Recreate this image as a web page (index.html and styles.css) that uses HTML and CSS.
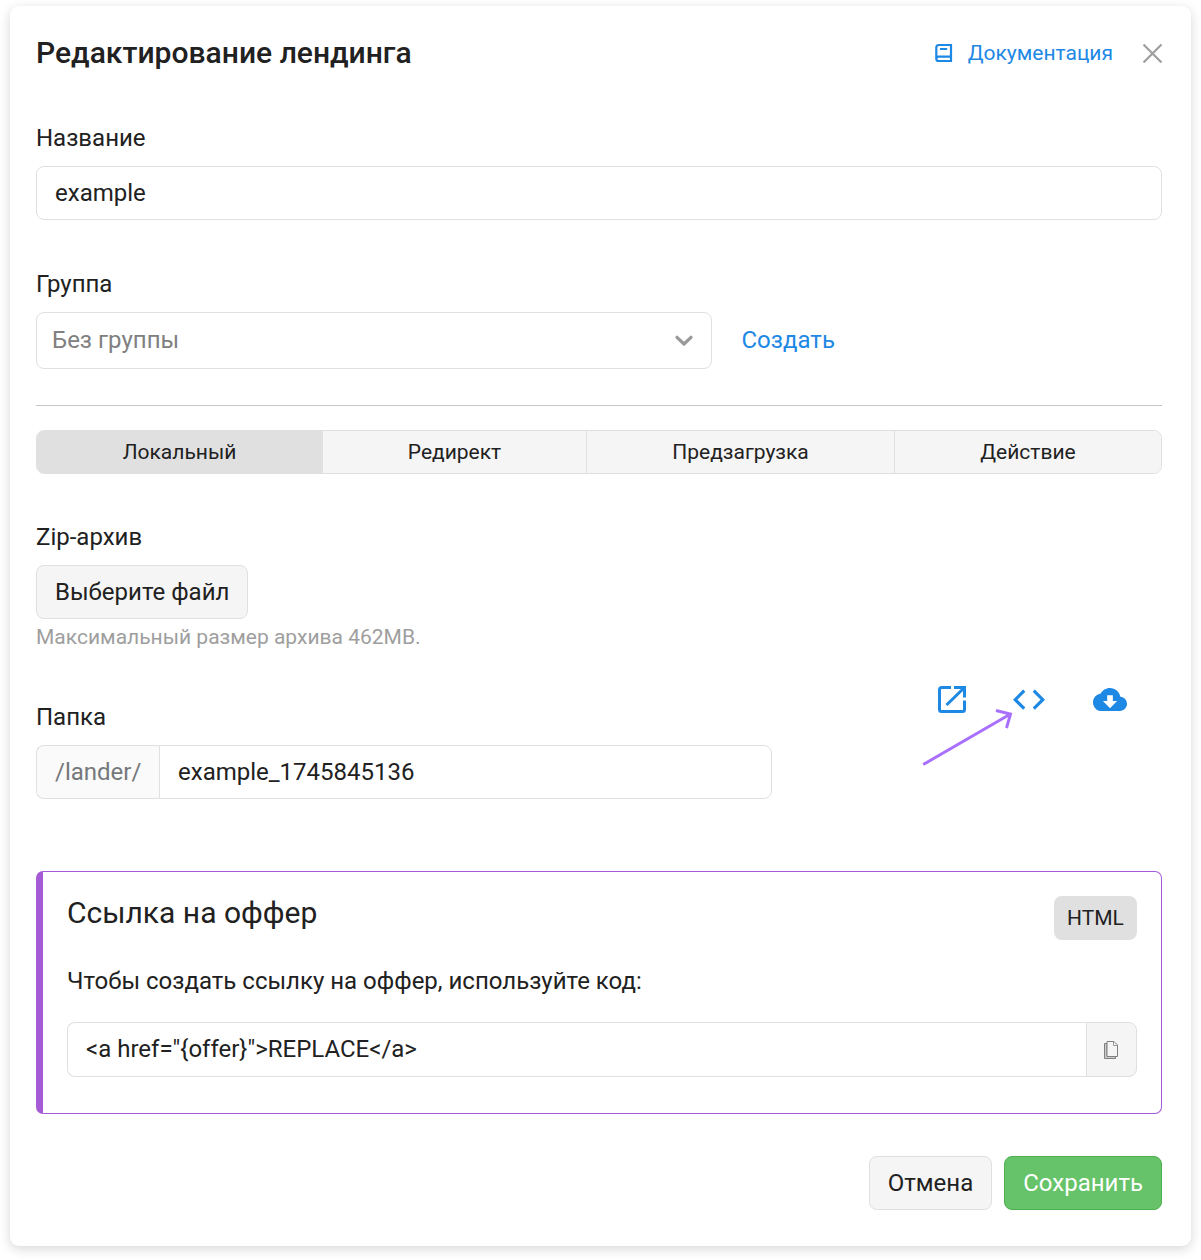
FILE: index.html
```html
<!DOCTYPE html>
<html lang="ru">
<head>
<meta charset="utf-8">
<title>Редактирование лендинга</title>
<link rel="stylesheet" href="styles.css">
</head>
<body>
<main class="modal">
  <header class="header">
    <h1 class="title">Редактирование лендинга</h1>
    <a class="docs" href="#">
      <svg width="18" height="20" viewBox="0 0 18 20" fill="none" stroke="currentColor" stroke-width="2.200"><path d="M16 2H3.800A2.400 2.400 0 0 0 1.300 4.400V16A2.300 2.300 0 0 0 3.600 18H16ZM1.500 15Q2 13.700 3.500 13.700H16"/><path d="M5 6H12.200" stroke-width="2"/></svg>
      <span>Документация</span>
    </a>
    <button class="close" aria-label="Закрыть">
      <svg width="20" height="20" viewBox="0 0 20 20" fill="none" stroke="currentColor" stroke-width="2.200"><path d="M.5 1.500 18.500 19.500M18.500 1.500 .5 19.500"/></svg>
    </button>
  </header>

  <label class="label">Название</label>
  <div class="field">example</div>

  <label class="label label-group">Группа</label>
  <div class="group-row">
    <div class="select"><span>Без группы</span>
      <svg width="18" height="11" viewBox="0 0 18 11" fill="none" stroke="currentColor" stroke-width="3.200" stroke-linecap="round" stroke-linejoin="round"><path d="M2 2.300 9 9 16 2.300"/></svg>
    </div>
    <a class="create" href="#">Создать</a>
  </div>

  <hr class="divider">

  <nav class="tabs">
    <button class="tab active">Локальный</button>
    <button class="tab">Редирект</button>
    <button class="tab">Предзагрузка</button>
    <button class="tab">Действие</button>
  </nav>

  <label class="label label-zip">Zip-архив</label>
  <button class="btn file">Выберите файл</button>
  <p class="hint">Максимальный размер архива 462MB.</p>

  <section class="folder">
    <div class="folder-main">
      <label class="label label-folder">Папка</label>
      <div class="input-group">
        <span class="addon">/lander/</span>
        <div class="field">example_1745845136</div>
      </div>
    </div>
    <div class="actions">
      <svg class="open" width="28" height="28" viewBox="0 0 28 28" fill="none" stroke="currentColor" stroke-width="3"><path d="M13 2.500H3.500A2 2 0 0 0 1.500 4.500V24.500A2 2 0 0 0 3.500 26.500H24.500A2 2 0 0 0 26.500 24.500V15.500M16 2.500H26.500V12.500M26 3 8.500 20"/></svg>
      <svg class="code" width="32" height="21" viewBox="0 0 32 21" fill="none" stroke="currentColor" stroke-width="3.200"><path d="M11.200 1.700 2.200 10.700 11.200 19.700M20.800 1.700 29.800 10.700 20.800 19.700"/></svg>
      <svg class="cloud" width="34" height="23" viewBox="0 4 24 16" preserveAspectRatio="none" fill="currentColor"><path d="M19.350 10.040C18.670 6.590 15.640 4 12 4 9.110 4 6.600 5.640 5.350 8.040 2.340 8.360 0 10.910 0 14c0 3.310 2.690 6 6 6h13c2.760 0 5-2.240 5-5 0-2.640-2.050-4.780-4.650-4.960zM17 13l-5 5-5-5h3V9h4v4h3z"/></svg>
      <svg class="pointer" width="94" height="60" viewBox="0 0 94 60" fill="none" stroke="#a970ff" stroke-width="3"><path d="M1.200 56.500 88.500 6M74 2.500 88.500 6 84.500 20"/></svg>
    </div>
  </section>

  <section class="card">
    <div class="card-head">
      <h2 class="card-title">Ссылка на оффер</h2>
      <span class="badge">HTML</span>
    </div>
    <p class="card-text">Чтобы создать ссылку на оффер, используйте код:</p>
    <div class="input-group code-line">
      <div class="field">&lt;a href="{offer}"&gt;REPLACE&lt;/a&gt;</div>
      <button class="copy" aria-label="Копировать">
        <svg width="14" height="18" viewBox="0 0 14 18"><path d="M.5 2.500H3V15.500H11.500V17.500H.5Z" fill="#ccc" stroke="#808080"/><path d="M3 .5H10L13.500 4V15.500H3Z" fill="#f5f5f5" stroke="#808080"/><path d="M9.500 .5V4.500H13.500" fill="none" stroke="#999"/></svg>
      </button>
    </div>
  </section>

  <footer class="footer">
    <button class="btn">Отмена</button>
    <button class="btn save">Сохранить</button>
  </footer>
</main>
</body>
</html>
```
FILE: styles.css
```css
* { box-sizing: border-box; }
body {
  margin: 0;
  padding: 6px 10px 14px;
  height: 1260px;
  overflow: hidden;
  background: #fff;
  color: #212121;
  font: 24px/36px Roboto, sans-serif;
}
button { font: inherit; color: inherit; margin: 0; }
a { color: #1e88e5; text-decoration: none; }
h1, h2, p { margin: 0; }
svg { display: block; flex: none; }
.modal {
  height: 1240px;
  padding: 0 29px 0 26px;
  border-radius: 9px;
  background: #fff;
  box-shadow: 0 3px 12px rgba(0, 0, 0, .16);
}
.header { display: flex; align-items: center; height: 94px; margin-right: -1px; }
.title { flex: 1; font-size: 30.050px; font-weight: 500; line-height: 36px; }
.docs { display: flex; align-items: center; gap: 14px; font-size: 21px; }
.docs svg { margin: 0 1px 0 -1px; }
.close { margin-left: 30px; padding: 0; border: 0; background: none; color: #9e9e9e; }
.label { display: block; margin: 20px 0 10px; }
.label-group { margin-top: 46px; }
.label-zip { margin-top: 45px; }
.label-folder { margin-top: 0; }
.field {
  height: 54px;
  padding: 0 18px;
  border: 1px solid #e0e0e0;
  border-radius: 8px;
  line-height: 52px;
}
.group-row { display: flex; align-items: center; gap: 29.500px; }
.group-row span, .create { padding-bottom: 2px; }
.select {
  display: flex;
  align-items: center;
  justify-content: space-between;
  width: 676px;
  height: 57px;
  padding: 0 18px 0 15px;
  border: 1px solid #e0e0e0;
  border-radius: 8px;
  color: #808080;
}
.select svg { color: #999; }
.divider { height: 1px; margin: 36px 0 24px; border: 0; background: #c6c6c6; }
.tabs {
  display: grid;
  grid-template-columns: 286px 264px 308px 1fr;
  height: 44px;
  border: 1px solid #e0e0e0;
  border-radius: 8px;
  overflow: hidden;
}
.tab {
  padding: 0;
  border: 0;
  border-right: 1px solid #e0e0e0;
  background: #f5f5f5;
  font-size: 21px;
  line-height: 42px;
}
.tab:last-child { border-right: 0; }
.tab.active { background: #e0e0e0; }
.btn {
  height: 54px;
  padding: 0 18px;
  border: 1px solid #e0e0e0;
  border-radius: 8px;
  background: #f5f5f5;
}
.file { display: block; }
.hint { color: #9e9e9e; font-size: 21px; }
.folder { display: flex; justify-content: space-between; margin-top: 44px; }
.folder-main { width: 736px; }
.input-group { display: flex; }
.input-group .field { flex: 1; }
.addon {
  width: 123px;
  padding-left: 18px;
  border: 1px solid #e0e0e0;
  border-right: 0;
  border-radius: 8px 0 0 8px;
  background: #fafafa;
  color: #75787b;
  line-height: 52px;
}
.addon + .field { border-radius: 0 8px 8px 0; }
.actions { position: relative; display: flex; align-items: center; height: 28px; width: 224px; margin-top: -14px; color: #1e88e5; }
.code { margin-left: 47px; }
.cloud { margin-left: 47.500px; }
.pointer { position: absolute; left: -16px; top: 23px; }
.card {
  height: 243px;
  margin-top: 72px;
  padding: 24px 24px 0;
  border: 1px solid #a55bd5;
  border-left-width: 7px;
  border-radius: 7px;
}
.card-head { display: flex; justify-content: space-between; }
.card-title { font-size: 30px; font-weight: 400; line-height: 34px; }
.badge {
  width: 83px;
  height: 44px;
  border-radius: 8px;
  background: #e0e0e0;
  font-size: 21px;
  line-height: 44px;
  text-align: center;
}
.card-text { margin: 23px 0; }
.code-line .field { height: 55px; border-right: 0; border-radius: 8px 0 0 8px; }
.copy {
  display: grid;
  place-items: center;
  width: 51px;
  padding: 0 1px 0 0;
  border: 1px solid #e0e0e0;
  border-radius: 0 8px 8px 0;
  background: #f5f5f5;
}
.footer { display: flex; justify-content: flex-end; gap: 12px; margin-top: 42px; }
.save { border-color: #4caf50; background: #66c369; color: #fff; }
```
